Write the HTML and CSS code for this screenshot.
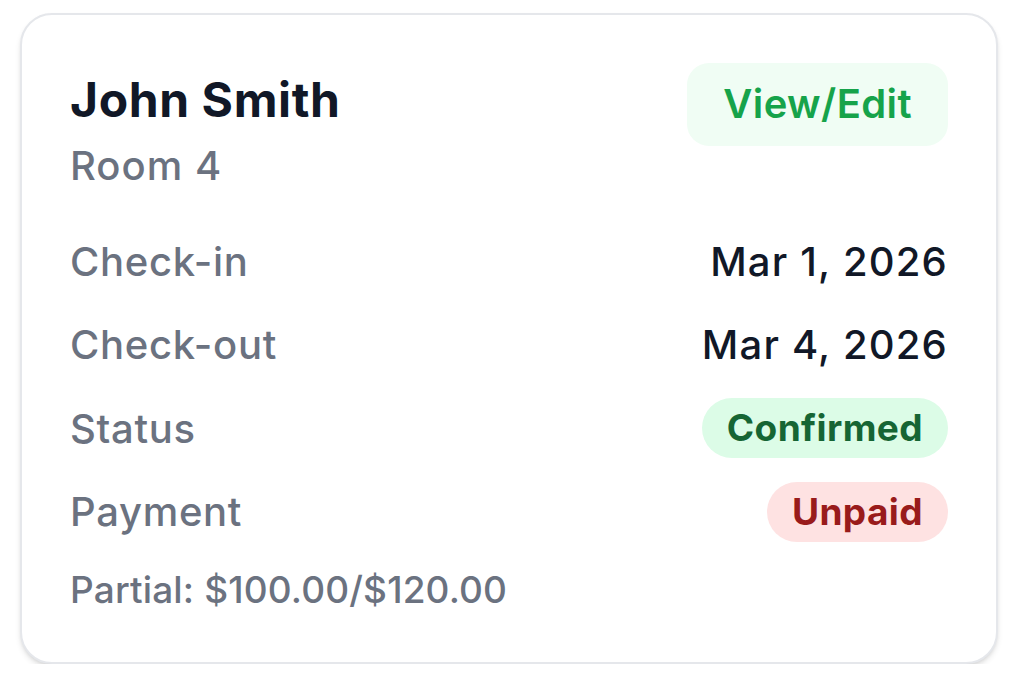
FILE: index.html
```html
<!DOCTYPE html>
<html>
<head>
<meta charset="utf-8">
<link rel="stylesheet" href="styles.css">
</head>
<body>
<div class="card">
  <div class="header">
    <div class="who">
      <div class="name">John Smith</div>
      <div class="room">Room 4</div>
    </div>
    <button class="edit">View/Edit</button>
  </div>
  <div class="rows">
    <div class="row"><span class="label">Check-in</span><span class="value">Mar 1, 2026</span></div>
    <div class="row"><span class="label">Check-out</span><span class="value">Mar 4, 2026</span></div>
    <div class="row"><span class="label">Status</span><span class="badge ok">Confirmed</span></div>
    <div class="row"><span class="label">Payment</span><span class="badge bad">Unpaid</span></div>
  </div>
  <div class="partial">Partial: $100.00/$120.00</div>
</div>
</body>
</html>
```
FILE: styles.css
```css
html, body { margin: 0; padding: 0; background: #ffffff; }
body { font-family: Inter, "Noto Sans", sans-serif; }
.card {
  box-sizing: border-box;
  width: 978px;
  height: 651px;
  margin: 13px 0 0 20px;
  border: 2px solid #e5e7eb;
  border-radius: 32px;
  padding: 47.5px 48px 40px 48px;
  box-shadow: 0 4px 6px -1px rgba(0,0,0,0.12), 0 2px 4px -2px rgba(0,0,0,0.12);
  background: #fff;
}
.header { display: flex; justify-content: space-between; align-items: flex-start; }
.name { font-size: 48px; font-weight: 700; color: #111827; line-height: 74px; letter-spacing: 0.6px; }
.room { font-size: 40px; font-weight: 500; color: #6b7280; line-height: 48px; margin-top: 5px; letter-spacing: 1px; }
.edit {
  font-family: inherit;
  border: none;
  background: #f0fdf4;
  color: #16a34a;
  font-size: 40px;
  font-weight: 600;
  padding: 17.5px 36px;
  border-radius: 22px;
  line-height: 48px;
  letter-spacing: 0.4px;
}
.rows { margin-top: 30px; }
.row { display: flex; justify-content: space-between; align-items: center; height: 83.5px; }
.label { font-size: 40px; font-weight: 500; color: #6b7280; letter-spacing: 0.7px; }
.value { font-size: 40px; font-weight: 500; color: #111827; letter-spacing: 1.2px; }
.badge { font-size: 37px; font-weight: 700; padding: 10px 25px; border-radius: 999px; line-height: 40px; letter-spacing: 0.4px; }
.ok { background: #dcfce7; color: #166534; }
.bad { background: #fee2e2; color: #991b1b; }
.partial { font-size: 37px; font-weight: 500; color: #6b7280; margin-top: 13.7px; letter-spacing: 0.15px; }
```
